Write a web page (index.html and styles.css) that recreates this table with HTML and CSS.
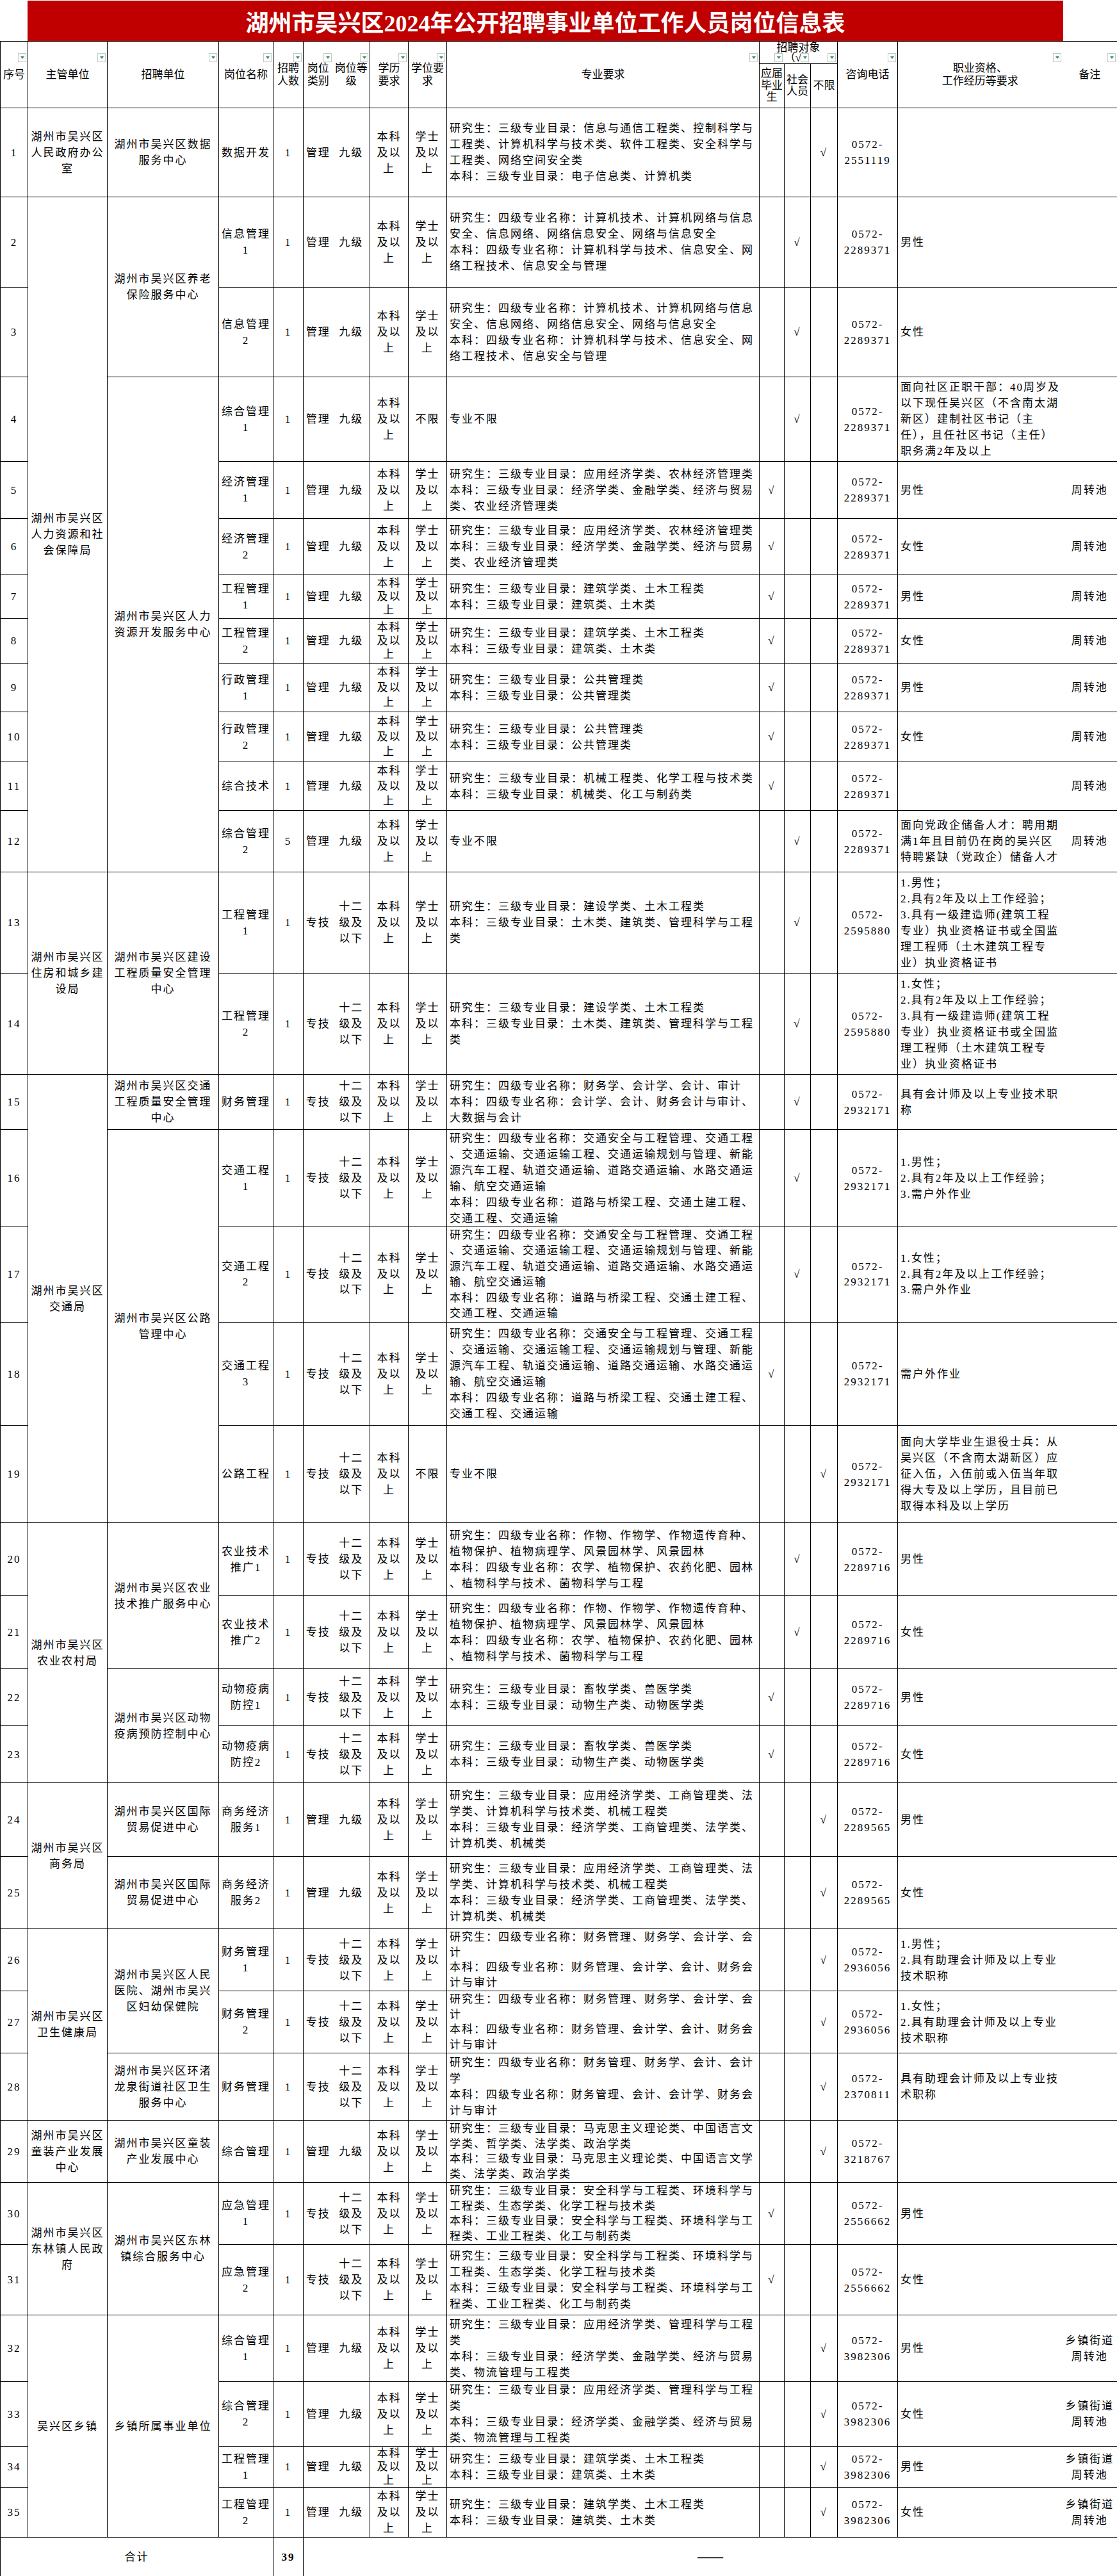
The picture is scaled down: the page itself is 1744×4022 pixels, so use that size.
FILE: index.html
```html
<!DOCTYPE html>
<html lang="zh-CN">
<head>
<meta charset="utf-8">
<title>湖州市吴兴区2024年公开招聘事业单位工作人员岗位信息表</title>
<link rel="stylesheet" href="styles.css">
</head>
<body>
<div class="title">湖州市吴兴区2024年公开招聘事业单位工作人员岗位信息表</div>
<table class="sheet">
<colgroup>
<col class="w43"><col class="w124"><col class="w174"><col class="w85"><col class="w47"><col class="w46"><col class="w58"><col class="w60"><col class="w60"><col class="w488"><col class="w39"><col class="w41"><col class="w42"><col class="w94"><col class="w257"><col class="w86">
</colgroup>
<thead>
<tr class="h33">
<th rowspan="2">序号<span class="flt"></span></th>
<th rowspan="2">主管单位<span class="flt"></span></th>
<th rowspan="2">招聘单位<span class="flt"></span></th>
<th rowspan="2">岗位名称<span class="flt"></span></th>
<th rowspan="2">招聘<br>人数<span class="flt"></span></th>
<th rowspan="2" class="cat">岗位<br>类别<span class="flt"></span></th>
<th rowspan="2" class="lvl">岗位等<br>级<span class="flt"></span></th>
<th rowspan="2">学历<br>要求<span class="flt"></span></th>
<th rowspan="2">学位要<br>求<span class="flt"></span></th>
<th rowspan="2">专业要求<span class="flt"></span></th>
<th colspan="3" class="grp">招聘对象<br>（√）<span class="flt f1"></span><span class="flt f2"></span><span class="flt f3"></span></th>
<th rowspan="2">咨询电话<span class="flt"></span></th>
<th rowspan="2" class="req hq">职业资格、<br>工作经历等要求<span class="flt"></span></th>
<th rowspan="2" class="rmk">备注<span class="flt"></span></th>
</tr>
<tr class="h69">
<th class="sub">应届<br>毕业<br>生</th>
<th class="sub">社会<br>人员</th>
<th class="sub">不限</th>
</tr>
</thead>
<tbody>
<tr class="h139">
<td>1</td>
<td>湖州市吴兴区人民政府办公室</td>
<td class="unit">湖州市吴兴区数据服务中心</td>
<td>数据开发</td>
<td>1</td><td class="cat">管理</td><td class="lvl">九级</td>
<td class="stk">本科及以上</td><td class="stk">学士及以上</td>
<td class="maj">研究生：三级专业目录：信息与通信工程类、控制科学与<br>工程类、计算机科学与技术类、软件工程类、安全科学与<br>工程类、网络空间安全类<br>本科：三级专业目录：电子信息类、计算机类</td>
<td></td><td></td><td>√</td>
<td>0572-<br>2551119</td>
<td class="req"></td><td class="rmk"></td>
</tr>
<tr class="h141">
<td>2</td>
<td rowspan="11">湖州市吴兴区人力资源和社会保障局</td>
<td rowspan="2" class="unit">湖州市吴兴区养老保险服务中心</td>
<td>信息管理1</td>
<td>1</td><td class="cat">管理</td><td class="lvl">九级</td>
<td class="stk">本科及以上</td><td class="stk">学士及以上</td>
<td class="maj">研究生：四级专业名称：计算机技术、计算机网络与信息<br>安全、信息网络、网络信息安全、网络与信息安全<br>本科：四级专业名称：计算机科学与技术、信息安全、网<br>络工程技术、信息安全与管理</td>
<td></td><td>√</td><td></td>
<td>0572-<br>2289371</td>
<td class="req">男性</td><td class="rmk"></td>
</tr>
<tr class="h140">
<td>3</td>
<td>信息管理2</td>
<td>1</td><td class="cat">管理</td><td class="lvl">九级</td>
<td class="stk">本科及以上</td><td class="stk">学士及以上</td>
<td class="maj">研究生：四级专业名称：计算机技术、计算机网络与信息<br>安全、信息网络、网络信息安全、网络与信息安全<br>本科：四级专业名称：计算机科学与技术、信息安全、网<br>络工程技术、信息安全与管理</td>
<td></td><td>√</td><td></td>
<td>0572-<br>2289371</td>
<td class="req">女性</td><td class="rmk"></td>
</tr>
<tr class="h132">
<td>4</td>
<td rowspan="9" class="unit">湖州市吴兴区人力资源开发服务中心</td>
<td>综合管理1</td>
<td>1</td><td class="cat">管理</td><td class="lvl">九级</td>
<td class="stk">本科及以上</td><td class="stk">不限</td>
<td class="maj">专业不限</td>
<td></td><td>√</td><td></td>
<td>0572-<br>2289371</td>
<td class="req">面向社区正职干部：40周岁及<br>以下现任吴兴区（不含南太湖<br>新区）建制社区书记（主<br>任），且任社区书记（主任）<br>职务满2年及以上</td><td class="rmk"></td>
</tr>
<tr class="h89">
<td>5</td>
<td>经济管理1</td>
<td>1</td><td class="cat">管理</td><td class="lvl">九级</td>
<td class="stk">本科及以上</td><td class="stk">学士及以上</td>
<td class="maj">研究生：三级专业目录：应用经济学类、农林经济管理类<br>本科：三级专业目录：经济学类、金融学类、经济与贸易<br>类、农业经济管理类</td>
<td>√</td><td></td><td></td>
<td>0572-<br>2289371</td>
<td class="req">男性</td><td class="rmk">周转池</td>
</tr>
<tr class="h88">
<td>6</td>
<td>经济管理2</td>
<td>1</td><td class="cat">管理</td><td class="lvl">九级</td>
<td class="stk">本科及以上</td><td class="stk">学士及以上</td>
<td class="maj">研究生：三级专业目录：应用经济学类、农林经济管理类<br>本科：三级专业目录：经济学类、金融学类、经济与贸易<br>类、农业经济管理类</td>
<td>√</td><td></td><td></td>
<td>0572-<br>2289371</td>
<td class="req">女性</td><td class="rmk">周转池</td>
</tr>
<tr class="h68 tight">
<td>7</td>
<td>工程管理1</td>
<td>1</td><td class="cat">管理</td><td class="lvl">九级</td>
<td class="stk">本科及以上</td><td class="stk">学士及以上</td>
<td class="maj">研究生：三级专业目录：建筑学类、土木工程类<br>本科：三级专业目录：建筑类、土木类</td>
<td>√</td><td></td><td></td>
<td>0572-<br>2289371</td>
<td class="req">男性</td><td class="rmk">周转池</td>
</tr>
<tr class="h70 tight">
<td>8</td>
<td>工程管理2</td>
<td>1</td><td class="cat">管理</td><td class="lvl">九级</td>
<td class="stk">本科及以上</td><td class="stk">学士及以上</td>
<td class="maj">研究生：三级专业目录：建筑学类、土木工程类<br>本科：三级专业目录：建筑类、土木类</td>
<td>√</td><td></td><td></td>
<td>0572-<br>2289371</td>
<td class="req">女性</td><td class="rmk">周转池</td>
</tr>
<tr class="h76 mid">
<td>9</td>
<td>行政管理1</td>
<td>1</td><td class="cat">管理</td><td class="lvl">九级</td>
<td class="stk">本科及以上</td><td class="stk">学士及以上</td>
<td class="maj">研究生：三级专业目录：公共管理类<br>本科：三级专业目录：公共管理类</td>
<td>√</td><td></td><td></td>
<td>0572-<br>2289371</td>
<td class="req">男性</td><td class="rmk">周转池</td>
</tr>
<tr class="h78 mid">
<td>10</td>
<td>行政管理2</td>
<td>1</td><td class="cat">管理</td><td class="lvl">九级</td>
<td class="stk">本科及以上</td><td class="stk">学士及以上</td>
<td class="maj">研究生：三级专业目录：公共管理类<br>本科：三级专业目录：公共管理类</td>
<td>√</td><td></td><td></td>
<td>0572-<br>2289371</td>
<td class="req">女性</td><td class="rmk">周转池</td>
</tr>
<tr class="h76 mid">
<td>11</td>
<td>综合技术</td>
<td>1</td><td class="cat">管理</td><td class="lvl">九级</td>
<td class="stk">本科及以上</td><td class="stk">学士及以上</td>
<td class="maj">研究生：三级专业目录：机械工程类、化学工程与技术类<br>本科：三级专业目录：机械类、化工与制药类</td>
<td>√</td><td></td><td></td>
<td>0572-<br>2289371</td>
<td class="req"></td><td class="rmk">周转池</td>
</tr>
<tr class="h96">
<td>12</td>
<td>综合管理2</td>
<td>5</td><td class="cat">管理</td><td class="lvl">九级</td>
<td class="stk">本科及以上</td><td class="stk">学士及以上</td>
<td class="maj">专业不限</td>
<td></td><td>√</td><td></td>
<td>0572-<br>2289371</td>
<td class="req">面向党政企储备人才：聘用期<br>满1年且目前仍在岗的吴兴区<br>特聘紧缺（党政企）储备人才</td><td class="rmk">周转池</td>
</tr>
<tr class="h158">
<td>13</td>
<td rowspan="2">湖州市吴兴区住房和城乡建设局</td>
<td rowspan="2" class="unit">湖州市吴兴区建设工程质量安全管理中心</td>
<td>工程管理1</td>
<td>1</td><td class="cat">专技</td><td class="lvl">十二级及以下</td>
<td class="stk">本科及以上</td><td class="stk">学士及以上</td>
<td class="maj">研究生：三级专业目录：建设学类、土木工程类<br>本科：三级专业目录：土木类、建筑类、管理科学与工程<br>类</td>
<td></td><td>√</td><td></td>
<td>0572-<br>2595880</td>
<td class="req">1.男性；<br>2.具有2年及以上工作经验；<br>3.具有一级建造师(建筑工程<br>专业）执业资格证书或全国监<br>理工程师（土木建筑工程专<br>业）执业资格证书</td><td class="rmk"></td>
</tr>
<tr class="h158">
<td>14</td>
<td>工程管理2</td>
<td>1</td><td class="cat">专技</td><td class="lvl">十二级及以下</td>
<td class="stk">本科及以上</td><td class="stk">学士及以上</td>
<td class="maj">研究生：三级专业目录：建设学类、土木工程类<br>本科：三级专业目录：土木类、建筑类、管理科学与工程<br>类</td>
<td></td><td>√</td><td></td>
<td>0572-<br>2595880</td>
<td class="req">1.女性；<br>2.具有2年及以上工作经验；<br>3.具有一级建造师(建筑工程<br>专业）执业资格证书或全国监<br>理工程师（土木建筑工程专<br>业）执业资格证书</td><td class="rmk"></td>
</tr>
<tr class="h86">
<td>15</td>
<td rowspan="5">湖州市吴兴区交通局</td>
<td class="unit">湖州市吴兴区交通工程质量安全管理中心</td>
<td>财务管理</td>
<td>1</td><td class="cat">专技</td><td class="lvl">十二级及以下</td>
<td class="stk">本科及以上</td><td class="stk">学士及以上</td>
<td class="maj">研究生：四级专业名称：财务学、会计学、会计、审计<br>本科：四级专业名称：会计学、会计、财务会计与审计、<br>大数据与会计</td>
<td></td><td>√</td><td></td>
<td>0572-<br>2932171</td>
<td class="req">具有会计师及以上专业技术职<br>称</td><td class="rmk"></td>
</tr>
<tr class="h152">
<td>16</td>
<td rowspan="4" class="unit">湖州市吴兴区公路管理中心</td>
<td>交通工程1</td>
<td>1</td><td class="cat">专技</td><td class="lvl">十二级及以下</td>
<td class="stk">本科及以上</td><td class="stk">学士及以上</td>
<td class="maj">研究生：四级专业名称：交通安全与工程管理、交通工程<br>、交通运输、交通运输工程、交通运输规划与管理、新能<br>源汽车工程、轨道交通运输、道路交通运输、水路交通运<br>输、航空交通运输<br>本科：四级专业名称：道路与桥梁工程、交通土建工程、<br>交通工程、交通运输</td>
<td></td><td>√</td><td></td>
<td>0572-<br>2932171</td>
<td class="req">1.男性；<br>2.具有2年及以上工作经验；<br>3.需户外作业</td><td class="rmk"></td>
</tr>
<tr class="h149 lh24">
<td>17</td>
<td>交通工程2</td>
<td>1</td><td class="cat">专技</td><td class="lvl">十二级及以下</td>
<td class="stk">本科及以上</td><td class="stk">学士及以上</td>
<td class="maj">研究生：四级专业名称：交通安全与工程管理、交通工程<br>、交通运输、交通运输工程、交通运输规划与管理、新能<br>源汽车工程、轨道交通运输、道路交通运输、水路交通运<br>输、航空交通运输<br>本科：四级专业名称：道路与桥梁工程、交通土建工程、<br>交通工程、交通运输</td>
<td></td><td>√</td><td></td>
<td>0572-<br>2932171</td>
<td class="req">1.女性；<br>2.具有2年及以上工作经验；<br>3.需户外作业</td><td class="rmk"></td>
</tr>
<tr class="h161">
<td>18</td>
<td>交通工程3</td>
<td>1</td><td class="cat">专技</td><td class="lvl">十二级及以下</td>
<td class="stk">本科及以上</td><td class="stk">学士及以上</td>
<td class="maj">研究生：四级专业名称：交通安全与工程管理、交通工程<br>、交通运输、交通运输工程、交通运输规划与管理、新能<br>源汽车工程、轨道交通运输、道路交通运输、水路交通运<br>输、航空交通运输<br>本科：四级专业名称：道路与桥梁工程、交通土建工程、<br>交通工程、交通运输</td>
<td>√</td><td></td><td></td>
<td>0572-<br>2932171</td>
<td class="req">需户外作业</td><td class="rmk"></td>
</tr>
<tr class="h152">
<td>19</td>
<td>公路工程</td>
<td>1</td><td class="cat">专技</td><td class="lvl">十二级及以下</td>
<td class="stk">本科及以上</td><td class="stk">不限</td>
<td class="maj">专业不限</td>
<td></td><td></td><td>√</td>
<td>0572-<br>2932171</td>
<td class="req">面向大学毕业生退役士兵：从<br>吴兴区（不含南太湖新区）应<br>征入伍，入伍前或入伍当年取<br>得大专及以上学历，且目前已<br>取得本科及以上学历</td><td class="rmk"></td>
</tr>
<tr class="h114">
<td>20</td>
<td rowspan="4">湖州市吴兴区农业农村局</td>
<td rowspan="2" class="unit">湖州市吴兴区农业技术推广服务中心</td>
<td>农业技术推广1</td>
<td>1</td><td class="cat">专技</td><td class="lvl">十二级及以下</td>
<td class="stk">本科及以上</td><td class="stk">学士及以上</td>
<td class="maj">研究生：四级专业名称：作物、作物学、作物遗传育种、<br>植物保护、植物病理学、风景园林学、风景园林<br>本科：四级专业名称：农学、植物保护、农药化肥、园林<br>、植物科学与技术、菌物科学与工程</td>
<td></td><td>√</td><td></td>
<td>0572-<br>2289716</td>
<td class="req">男性</td><td class="rmk"></td>
</tr>
<tr class="h114">
<td>21</td>
<td>农业技术推广2</td>
<td>1</td><td class="cat">专技</td><td class="lvl">十二级及以下</td>
<td class="stk">本科及以上</td><td class="stk">学士及以上</td>
<td class="maj">研究生：四级专业名称：作物、作物学、作物遗传育种、<br>植物保护、植物病理学、风景园林学、风景园林<br>本科：四级专业名称：农学、植物保护、农药化肥、园林<br>、植物科学与技术、菌物科学与工程</td>
<td></td><td>√</td><td></td>
<td>0572-<br>2289716</td>
<td class="req">女性</td><td class="rmk"></td>
</tr>
<tr class="h89">
<td>22</td>
<td rowspan="2" class="unit">湖州市吴兴区动物疫病预防控制中心</td>
<td>动物疫病防控1</td>
<td>1</td><td class="cat">专技</td><td class="lvl">十二级及以下</td>
<td class="stk">本科及以上</td><td class="stk">学士及以上</td>
<td class="maj">研究生：三级专业目录：畜牧学类、兽医学类<br>本科：三级专业目录：动物生产类、动物医学类</td>
<td>√</td><td></td><td></td>
<td>0572-<br>2289716</td>
<td class="req">男性</td><td class="rmk"></td>
</tr>
<tr class="h89">
<td>23</td>
<td>动物疫病防控2</td>
<td>1</td><td class="cat">专技</td><td class="lvl">十二级及以下</td>
<td class="stk">本科及以上</td><td class="stk">学士及以上</td>
<td class="maj">研究生：三级专业目录：畜牧学类、兽医学类<br>本科：三级专业目录：动物生产类、动物医学类</td>
<td>√</td><td></td><td></td>
<td>0572-<br>2289716</td>
<td class="req">女性</td><td class="rmk"></td>
</tr>
<tr class="h115">
<td>24</td>
<td rowspan="2">湖州市吴兴区商务局</td>
<td class="unit">湖州市吴兴区国际贸易促进中心</td>
<td>商务经济服务1</td>
<td>1</td><td class="cat">管理</td><td class="lvl">九级</td>
<td class="stk">本科及以上</td><td class="stk">学士及以上</td>
<td class="maj">研究生：三级专业目录：应用经济学类、工商管理类、法<br>学类、计算机科学与技术类、机械工程类<br>本科：三级专业目录：经济学类、工商管理类、法学类、<br>计算机类、机械类</td>
<td></td><td></td><td>√</td>
<td>0572-<br>2289565</td>
<td class="req">男性</td><td class="rmk"></td>
</tr>
<tr class="h113">
<td>25</td>
<td class="unit">湖州市吴兴区国际贸易促进中心</td>
<td>商务经济服务2</td>
<td>1</td><td class="cat">管理</td><td class="lvl">九级</td>
<td class="stk">本科及以上</td><td class="stk">学士及以上</td>
<td class="maj">研究生：三级专业目录：应用经济学类、工商管理类、法<br>学类、计算机科学与技术类、机械工程类<br>本科：三级专业目录：经济学类、工商管理类、法学类、<br>计算机类、机械类</td>
<td></td><td></td><td>√</td>
<td>0572-<br>2289565</td>
<td class="req">女性</td><td class="rmk"></td>
</tr>
<tr class="h97 cmp">
<td>26</td>
<td rowspan="3">湖州市吴兴区卫生健康局</td>
<td rowspan="2" class="unit">湖州市吴兴区人民医院、湖州市吴兴区妇幼保健院</td>
<td>财务管理1</td>
<td>1</td><td class="cat">专技</td><td class="lvl">十二级及以下</td>
<td class="stk">本科及以上</td><td class="stk">学士及以上</td>
<td class="maj">研究生：四级专业名称：财务管理、财务学、会计学、会<br>计<br>本科：四级专业名称：财务管理、会计学、会计、财务会<br>计与审计</td>
<td></td><td></td><td>√</td>
<td>0572-<br>2936056</td>
<td class="req">1.男性；<br>2.具有助理会计师及以上专业<br>技术职称</td><td class="rmk"></td>
</tr>
<tr class="h97 cmp">
<td>27</td>
<td>财务管理2</td>
<td>1</td><td class="cat">专技</td><td class="lvl">十二级及以下</td>
<td class="stk">本科及以上</td><td class="stk">学士及以上</td>
<td class="maj">研究生：四级专业名称：财务管理、财务学、会计学、会<br>计<br>本科：四级专业名称：财务管理、会计学、会计、财务会<br>计与审计</td>
<td></td><td></td><td>√</td>
<td>0572-<br>2936056</td>
<td class="req">1.女性；<br>2.具有助理会计师及以上专业<br>技术职称</td><td class="rmk"></td>
</tr>
<tr class="h105">
<td>28</td>
<td class="unit">湖州市吴兴区环渚龙泉街道社区卫生服务中心</td>
<td>财务管理</td>
<td>1</td><td class="cat">专技</td><td class="lvl">十二级及以下</td>
<td class="stk">本科及以上</td><td class="stk">学士及以上</td>
<td class="maj">研究生：四级专业名称：财务管理、财务学、会计、会计<br>学<br>本科：四级专业名称：财务管理、会计、会计学、财务会<br>计与审计</td>
<td></td><td></td><td>√</td>
<td>0572-<br>2370811</td>
<td class="req">具有助理会计师及以上专业技<br>术职称</td><td class="rmk"></td>
</tr>
<tr class="h97 cmp">
<td>29</td>
<td>湖州市吴兴区童装产业发展中心</td>
<td class="unit">湖州市吴兴区童装产业发展中心</td>
<td>综合管理</td>
<td>1</td><td class="cat">管理</td><td class="lvl">九级</td>
<td class="stk">本科及以上</td><td class="stk">学士及以上</td>
<td class="maj">研究生：三级专业目录：马克思主义理论类、中国语言文<br>学类、哲学类、法学类、政治学类<br>本科：三级专业目录：马克思主义理论类、中国语言文学<br>类、法学类、政治学类</td>
<td></td><td></td><td>√</td>
<td>0572-<br>3218767</td>
<td class="req"></td><td class="rmk"></td>
</tr>
<tr class="h97 cmp">
<td>30</td>
<td rowspan="2">湖州市吴兴区东林镇人民政府</td>
<td rowspan="2" class="unit">湖州市吴兴区东林镇综合服务中心</td>
<td>应急管理1</td>
<td>1</td><td class="cat">专技</td><td class="lvl">十二级及以下</td>
<td class="stk">本科及以上</td><td class="stk">学士及以上</td>
<td class="maj">研究生：三级专业目录：安全科学与工程类、环境科学与<br>工程类、生态学类、化学工程与技术类<br>本科：三级专业目录：安全科学与工程类、环境科学与工<br>程类、工业工程类、化工与制药类</td>
<td>√</td><td></td><td></td>
<td>0572-<br>2556662</td>
<td class="req">男性</td><td class="rmk"></td>
</tr>
<tr class="h110">
<td>31</td>
<td>应急管理2</td>
<td>1</td><td class="cat">专技</td><td class="lvl">十二级及以下</td>
<td class="stk">本科及以上</td><td class="stk">学士及以上</td>
<td class="maj">研究生：三级专业目录：安全科学与工程类、环境科学与<br>工程类、生态学类、化学工程与技术类<br>本科：三级专业目录：安全科学与工程类、环境科学与工<br>程类、工业工程类、化工与制药类</td>
<td>√</td><td></td><td></td>
<td>0572-<br>2556662</td>
<td class="req">女性</td><td class="rmk"></td>
</tr>
<tr class="h104">
<td>32</td>
<td rowspan="4">吴兴区乡镇</td>
<td rowspan="4" class="unit">乡镇所属事业单位</td>
<td>综合管理1</td>
<td>1</td><td class="cat">管理</td><td class="lvl">九级</td>
<td class="stk">本科及以上</td><td class="stk">学士及以上</td>
<td class="maj">研究生：三级专业目录：应用经济学类、管理科学与工程<br>类<br>本科：三级专业目录：经济学类、金融学类、经济与贸易<br>类、物流管理与工程类</td>
<td></td><td></td><td>√</td>
<td>0572-<br>3982306</td>
<td class="req">男性</td><td class="rmk">乡镇街道<br>周转池</td>
</tr>
<tr class="h101">
<td>33</td>
<td>综合管理2</td>
<td>1</td><td class="cat">管理</td><td class="lvl">九级</td>
<td class="stk">本科及以上</td><td class="stk">学士及以上</td>
<td class="maj">研究生：三级专业目录：应用经济学类、管理科学与工程<br>类<br>本科：三级专业目录：经济学类、金融学类、经济与贸易<br>类、物流管理与工程类</td>
<td></td><td></td><td>√</td>
<td>0572-<br>3982306</td>
<td class="req">女性</td><td class="rmk">乡镇街道<br>周转池</td>
</tr>
<tr class="h64 tight">
<td>34</td>
<td>工程管理1</td>
<td>1</td><td class="cat">管理</td><td class="lvl">九级</td>
<td class="stk">本科及以上</td><td class="stk">学士及以上</td>
<td class="maj">研究生：三级专业目录：建筑学类、土木工程类<br>本科：三级专业目录：建筑类、土木类</td>
<td></td><td></td><td>√</td>
<td>0572-<br>3982306</td>
<td class="req">男性</td><td class="rmk">乡镇街道<br>周转池</td>
</tr>
<tr class="h78">
<td>35</td>
<td>工程管理2</td>
<td>1</td><td class="cat">管理</td><td class="lvl">九级</td>
<td class="stk">本科及以上</td><td class="stk">学士及以上</td>
<td class="maj">研究生：三级专业目录：建筑学类、土木工程类<br>本科：三级专业目录：建筑类、土木类</td>
<td></td><td></td><td>√</td>
<td>0572-<br>3982306</td>
<td class="req">女性</td><td class="rmk">乡镇街道<br>周转池</td>
</tr>
<tr class="h61 total">
<td colspan="4">合计</td>
<td class="sum">39</td>
<td colspan="11" class="dash">——</td>
</tr>
</tbody>
</table>
</body>
</html>
```

FILE: styles.css
```css
* { box-sizing: border-box; }
html, body { margin: 0; padding: 0; background: #fff; }
body {
  width: 1744px;
  font-family: "Liberation Serif", "Noto Sans CJK SC", serif;
  color: #000;
}
.title {
  margin: 1px 84px 0 43px;
  height: 63px;
  background: #c00000;
  color: #fff;
  display: flex;
  align-items: center;
  justify-content: center;
  font-size: 36px;
  font-weight: 700;
}
.sheet {
  width: 1744px;
  border-collapse: collapse;
  table-layout: fixed;
}
.w43 { width: 43px; } .w124 { width: 124px; } .w174 { width: 174px; } .w85 { width: 85px; }
.w47 { width: 47px; } .w46 { width: 46px; } .w58 { width: 58px; } .w60 { width: 60px; }
.w488 { width: 488px; } .w39 { width: 39px; } .w41 { width: 41px; } .w42 { width: 42px; }
.w94 { width: 94px; } .w257 { width: 257px; } .w86 { width: 86px; }

.sheet td, .sheet th {
  border: 1px solid #000;
  padding: 0 2px;
  vertical-align: middle;
  text-align: center;
  font-size: 17px;
  letter-spacing: 2px;
  line-height: 25px;
  font-weight: 400;
  overflow: visible;
}
.sheet th {
  position: relative;
  letter-spacing: 0;
  line-height: 20px;
}
.sheet th.sub { line-height: 18.5px; }
.sheet th.grp { vertical-align: top; padding-top: 2px; line-height: 16px; }

.h33 { height: 33px; } .h69 { height: 69px; } .h139 { height: 139px; } .h141 { height: 141px; }
.h140 { height: 140px; } .h132 { height: 132px; } .h89 { height: 89px; } .h88 { height: 88px; }
.h68 { height: 68px; } .h70 { height: 70px; } .h76 { height: 76px; } .h78 { height: 78px; }
.h96 { height: 96px; } .h158 { height: 158px; } .h86 { height: 86px; } .h152 { height: 152px; }
.h149 { height: 149px; } .h161 { height: 161px; } .h114 { height: 114px; } .h115 { height: 115px; }
.h113 { height: 113px; } .h97 { height: 97px; } .h105 { height: 105px; } .h110 { height: 110px; }
.h104 { height: 104px; } .h101 { height: 101px; } .h64 { height: 64px; } .h61 { height: 61px; }

.sheet .unit { padding: 0 4px; }
.sheet .stk { padding: 0 3px; }
.sheet .maj, .sheet td.req {
  text-align: left;
  white-space: nowrap;
  padding: 0 3px 0 4px;
}
.sheet .cat { border-right-style: hidden; }
.sheet .req { border-right-style: hidden; }

.tight .stk { line-height: 21px; }
.mid .stk { line-height: 23.5px; }
.lh24 td { line-height: 24.5px; }
.cmp .maj { line-height: 23.5px; }

.total .sum, .total .dash { font-weight: 700; }
.total .dash { font-size: 20px; letter-spacing: 0; }

.flt {
  position: absolute;
  top: 18px;
  right: 2px;
  width: 13px;
  height: 14px;
  background: #fff;
  border: 1px solid #c8c8c8;
}
.flt::after {
  content: "";
  position: absolute;
  left: 3px;
  top: 4px;
  border-left: 3px solid transparent;
  border-right: 3px solid transparent;
  border-top: 4px solid #1f9a4e;
}
.grp .f1 { right: 85px; }
.grp .f2 { right: 44px; }
.grp .f3 { right: 2px; }
```
